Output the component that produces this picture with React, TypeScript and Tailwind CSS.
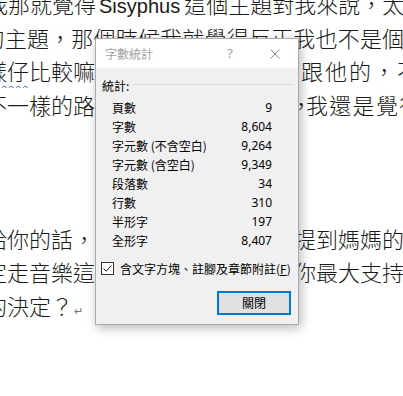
import React from "react";

const cjk = "font-['Noto_Sans_CJK_TC','Noto_Sans',sans-serif]";
const ui = "font-['Noto_Sans','Noto_Sans_CJK_TC',sans-serif]";

interface StatRow {
  label: string;
  value: string;
}

const STATS: StatRow[] = [
  { label: "頁數", value: "9" },
  { label: "字數", value: "8,604" },
  { label: "字元數 (不含空白)", value: "9,264" },
  { label: "字元數 (含空白)", value: "9,349" },
  { label: "段落數", value: "34" },
  { label: "行數", value: "310" },
  { label: "半形字", value: "197" },
  { label: "全形字", value: "8,407" },
];

// 一行文件內容：左段露在對話框左邊，右段從對話框右邊露出
function SplitLine({
  left,
  right,
  split,
}: {
  left: React.ReactNode;
  right: React.ReactNode;
  split: string;
}) {
  return (
    <div className="-ml-[15px] flex h-[33.5px] whitespace-nowrap">
      <span className={`${split} shrink-0 overflow-hidden`}>{left}</span>
      <span>{right}</span>
    </div>
  );
}

function WordCountDialog() {
  return (
    <div
      className={`absolute left-[95px] top-[38px] flex h-[287px] w-[204px] flex-col border border-[#aaaaaa] bg-[#f0f0f0] shadow-[2px_3px_10px_rgba(0,0,0,0.28)] ${cjk}`}
    >
      {/* Title bar */}
      <div className="flex h-[29px] shrink-0 items-center bg-white pl-[9px] pr-[18px] text-[12px] text-[#a0a0a0]">
        <span>字數統計</span>
        <span className={`ml-auto w-[20px] text-center text-[13px] ${ui}`}>?</span>
        <svg className="ml-[30px]" width="10" height="10" viewBox="0 0 10 10">
          <path d="M0.5 0.5 L9.5 9.5 M9.5 0.5 L0.5 9.5" stroke="#8a8a8a" strokeWidth="1" fill="none" />
        </svg>
      </div>

      {/* Body */}
      <div className="flex flex-1 flex-col px-[6px] pt-[10px] text-[12px] text-black">
        <div className="flex h-[16px] items-center">
          <span>統計:</span>
          <div className="mb-[4px] ml-[4px] h-px flex-1 bg-[#d9d9d9]" />
        </div>

        <div className="mt-[4px] pl-[10px] pr-[20px]">
          {STATS.map((row) => (
            <div key={row.label} className="flex h-[19px] items-center justify-between">
              <span>{row.label}</span>
              <span className={ui}>{row.value}</span>
            </div>
          ))}
        </div>

        {/* Checkbox */}
        <div className="mt-[12px] flex h-[13px] items-center">
          <div className="ml-[-1px] flex h-[13px] w-[13px] items-center justify-center border border-[#333333] bg-white">
            <svg width="11" height="11" viewBox="0 0 11 11">
              <path d="M1.5 5.5 L4.2 8.2 L9.5 2.5" stroke="#222222" strokeWidth="1" fill="none" />
            </svg>
          </div>
          <span className="ml-[6px]">
            含文字方塊、註腳及章節附註(<span className="underline">F</span>)
          </span>
        </div>

        {/* Close button */}
        <div className="mt-[16px] flex justify-end pr-[1px]">
          <button className="flex h-[24px] w-[74px] items-center justify-center border-2 border-[#0078d7] bg-[#e1e1e1] text-[12px] text-black">
            關閉
          </button>
        </div>
      </div>
    </div>
  );
}

export default function App() {
  return (
    <div className="relative h-[396px] w-[403px] overflow-hidden bg-white">
      {/* Document text */}
      <div className={`-mt-[13px] text-[22px] font-light leading-[33.5px] text-[#1a1a1a] ${cjk}`}>
        <div className="-ml-[14px] flex h-[33.5px] items-baseline whitespace-nowrap">
          <span>我那就覺得</span>
          <span className="ml-[3px] mr-[4px] font-['Liberation_Sans',sans-serif] text-[20px] font-normal">
            Sisyphus
          </span>
          <span>這個主題對我來說，太過</span>
        </div>
        <div className="-ml-[17.5px] h-[33.5px] whitespace-nowrap tracking-[0.2px]">
          的主題，那個時候我就覺得反正我也不是個很
        </div>
        <SplitLine
          split="w-[292px]"
          left={
            <>
              <span className="underline decoration-wavy decoration-[#2b5fd9] decoration-1 underline-offset-[5px]">
                樣仔
              </span>
              比較嘛
            </>
          }
          right={<span className="tracking-[2px]">非跟他的，不</span>}
        />
        <SplitLine
          split="w-[305px]"
          left="不一樣的路"
          right={
            <>
              <span className="tracking-[-6px]">，</span>
              <span className="tracking-[1.3px]">我還是覺得</span>
            </>
          }
        />

        <div className="h-[100.5px]" />

        <SplitLine split="w-[309px]" left="給你的話，" right="提到媽媽的" />
        <SplitLine split="w-[309px]" left="定走音樂這" right="你最大支持" />
        <div className="-ml-[15px] h-[33.5px] whitespace-nowrap">
          的決定？
          <span className="ml-[1px] font-['DejaVu_Sans',sans-serif] text-[11px] text-[#777777]">↵</span>
        </div>
      </div>

      <WordCountDialog />
    </div>
  );
}
